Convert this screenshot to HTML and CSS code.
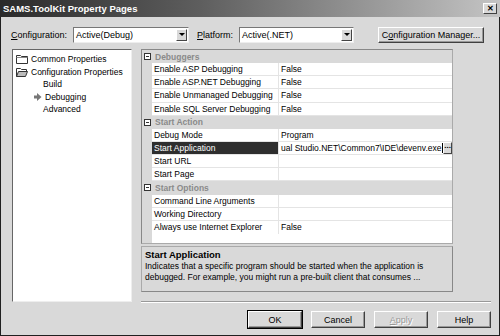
FILE: index.html
```html
<!DOCTYPE html>
<html lang="en">
<head>
    <meta charset="UTF-8">
    <title>SAMS.ToolKit Property Pages</title>
    <link rel="stylesheet" href="styles.css">
</head>
<body>
    <div class="window">
        <div class="titlebar">
            <span class="title">SAMS.ToolKit Property Pages</span>
            <span class="close">&#x2715;</span>
        </div>

        <div class="toolbar">
            <label class="field-label"><u>C</u>onfiguration:</label>
            <div class="combo combo-config">
                <span class="combo-text">Active(Debug)</span>
                <span class="combo-btn"><span class="arrow"></span></span>
            </div>
            <label class="field-label platform-label"><u>P</u>latform:</label>
            <div class="combo combo-platform">
                <span class="combo-text">Active(.NET)</span>
                <span class="combo-btn"><span class="arrow"></span></span>
            </div>
            <button class="btn btn-manager">C<u>o</u>nfiguration Manager...</button>
        </div>

        <div class="main">
            <div class="tree">
                <div class="tree-item">
                    <svg class="folder" width="12" height="10" viewBox="0 0 12 10">
                        <path d="M0.5 1.5h4l1 1h6v7h-11z" fill="#fff" stroke="#333"/>
                        <path d="M0.5 3.5h11" stroke="#888"/>
                    </svg>
                    Common Properties
                </div>
                <div class="tree-item">
                    <svg class="folder" width="12" height="10" viewBox="0 0 12 10">
                        <path d="M0.5 1.5h4l1 1h5v2" fill="none" stroke="#333"/>
                        <path d="M0.5 1.5v8h9l2-5h-9l-2 5" fill="#bbb" stroke="#333"/>
                    </svg>
                    Configuration Properties
                </div>
                <div class="tree-item child">Build</div>
                <div class="tree-item child current">
                    <svg class="pointer" width="8" height="8" viewBox="0 0 8 8">
                        <path d="M0 2.5h3v-2.5l4.5 4l-4.5 4v-2.5h-3z" fill="#777"/>
                    </svg>
                    Debugging
                </div>
                <div class="tree-item child">Advanced</div>
            </div>

            <div class="right">
                <div class="grid">
                    <div class="cat"><span class="minus"></span><span class="cat-name">Debuggers</span></div>
                    <div class="prop"><span class="name">Enable ASP Debugging</span><span class="value">False</span></div>
                    <div class="prop"><span class="name">Enable ASP.NET Debugging</span><span class="value">False</span></div>
                    <div class="prop"><span class="name">Enable Unmanaged Debugging</span><span class="value">False</span></div>
                    <div class="prop"><span class="name">Enable SQL Server Debugging</span><span class="value">False</span></div>
                    <div class="cat"><span class="minus"></span><span class="cat-name">Start Action</span></div>
                    <div class="prop"><span class="name">Debug Mode</span><span class="value">Program</span></div>
                    <div class="prop selected">
                        <span class="name">Start Application</span>
                        <span class="value edit"><span class="edit-text">ual Studio.NET\Common7\IDE\devenv.exe</span><span class="caret"></span><span class="dots">...</span></span>
                    </div>
                    <div class="prop"><span class="name">Start URL</span><span class="value"></span></div>
                    <div class="prop"><span class="name">Start Page</span><span class="value"></span></div>
                    <div class="cat"><span class="minus"></span><span class="cat-name">Start Options</span></div>
                    <div class="prop"><span class="name">Command Line Arguments</span><span class="value"></span></div>
                    <div class="prop"><span class="name">Working Directory</span><span class="value"></span></div>
                    <div class="prop last"><span class="name">Always use Internet Explorer</span><span class="value">False</span></div>
                </div>

                <div class="description">
                    <div class="desc-title">Start Application</div>
                    <p>Indicates that a specific program should be started when the application is debugged. For example, you might run a pre-built client that consumes ...</p>
                </div>

                <div class="separator"></div>

                <div class="buttons">
                    <button class="btn default">OK</button>
                    <button class="btn">Cancel</button>
                    <button class="btn disabled"><u>A</u>pply</button>
                    <button class="btn">Help</button>
                </div>
            </div>
        </div>
    </div>
</body>
</html>
```

FILE: styles.css
```css
* {
    margin: 0;
    padding: 0;
    box-sizing: border-box;
}

body {
    width: 500px;
    height: 336px;
    overflow: hidden;
    background: #fff;
    font-family: "Liberation Sans", Arial, sans-serif;
    font-size: 8.5px;
    color: #000;
}

.window {
    width: 500px;
    height: 336px;
    background: #d9d9d9;
    border: 1px solid #202020;
    border-top: none;
    display: flex;
    flex-direction: column;
}

.titlebar {
    height: 17px;
    margin: 0 -1px;
    background: linear-gradient(to right, #2a2a2a 0%, #5e5e5e 40%, #c4c4c4 100%);
    display: flex;
    align-items: center;
    justify-content: space-between;
    padding: 0 3px 0 3px;
}

.title {
    color: #fff;
    font-weight: 700;
    font-size: 9.5px;
}

.close {
    width: 14px;
    height: 11px;
    background: #d9d9d9;
    border: 1px solid;
    border-color: #fff #404040 #404040 #fff;
    font-size: 8px;
    line-height: 9px;
    text-align: center;
    font-weight: 700;
}

.toolbar {
    display: flex;
    align-items: center;
    height: 17px;
    margin-top: 9px;
    padding-left: 10px;
}

.field-label {
    margin-right: 6px;
    font-size: 9px;
}

.platform-label {
    margin-left: 8px;
}

.combo {
    height: 16px;
    background: #fff;
    border: 1px solid;
    border-color: #777 #eee #eee #777;
    display: flex;
    align-items: center;
    justify-content: space-between;
    padding: 1px 1px 1px 2px;
    font-size: 9px;
}

.combo-config {
    width: 116px;
}

.combo-platform {
    width: 115px;
}

.combo-btn {
    width: 11px;
    height: 12px;
    background: #d9d9d9;
    border: 1px solid;
    border-color: #fff #444 #444 #fff;
    display: flex;
    align-items: center;
    justify-content: center;
}

.arrow {
    border-left: 3px solid transparent;
    border-right: 3px solid transparent;
    border-top: 3px solid #000;
}

.btn {
    font-family: "Liberation Sans", Arial, sans-serif;
    font-size: 9px;
    background: #d9d9d9;
    color: #000;
    border: 1px solid;
    border-color: #fff #404040 #404040 #fff;
    box-shadow: inset -1px -1px 0 #999;
    height: 17px;
    width: 54px;
}

.btn-manager {
    width: 106px;
    margin-left: 24px;
    height: 16px;
}

.main {
    display: flex;
    padding-left: 11px;
    margin-top: 6px;
}

.tree {
    width: 120px;
    height: 253px;
    background: #fff;
    border: 1px solid;
    border-color: #666 #eee #eee #666;
    padding-top: 3px;
}

.tree-item {
    height: 12.5px;
    display: flex;
    align-items: center;
    padding-left: 3px;
    white-space: nowrap;
}

.folder {
    margin-right: 3px;
}

.tree-item.child {
    padding-left: 30px;
}

.tree-item.current {
    padding-left: 21px;
}

.pointer {
    margin-right: 3px;
}

.right {
    margin-left: 9px;
    width: 350px;
    display: flex;
    flex-direction: column;
}

.grid {
    width: 312px;
    height: 195px;
    background: #fff;
    border: 1px solid;
    border-color: #888 #aaa #aaa #888;
    background-image: linear-gradient(to right, #d9d9d9 10px, #fff 10px);
}

.cat,
.prop {
    height: 13.15px;
    display: flex;
    align-items: center;
}

.cat {
    background: #d9d9d9;
}

.minus {
    width: 7px;
    height: 7px;
    margin: 0 4px 0 2px;
    border: 1px solid #333;
    background: linear-gradient(#333, #333) center / 3px 1px no-repeat, #fff;
}

.cat-name {
    font-weight: 700;
    color: #8a8a8a;
}

.prop {
    padding-left: 10px;
}

.name,
.value {
    height: 100%;
    display: flex;
    align-items: center;
    border-bottom: 1px solid #e4e4e4;
    white-space: nowrap;
    overflow: hidden;
}

.name {
    width: 126px;
    padding-left: 2px;
}

.value {
    flex: 1;
    border-left: 1px solid #e4e4e4;
    padding-left: 2px;
}

.prop.last .name,
.prop.last .value {
    border-bottom: none;
}

.selected .name {
    background: #2e2e2e;
    color: #fff;
}

.value.edit {
    padding-right: 0;
}

.edit-text {
    white-space: nowrap;
}

.caret {
    width: 1px;
    height: 10px;
    margin-left: 1px;
    background: #000;
}

.dots {
    width: 12px;
    height: 12px;
    margin-left: auto;
    background: #d9d9d9;
    border: 1px solid;
    border-color: #fff #444 #444 #fff;
    font-size: 8px;
    line-height: 6px;
    text-align: center;
    font-weight: 700;
}

.description {
    width: 312px;
    height: 46px;
    margin-top: 2px;
    border: 1px solid;
    border-color: #aaa #888 #888 #aaa;
    padding: 2px 3px;
    line-height: 11px;
}

.desc-title {
    font-weight: 700;
    font-size: 9.5px;
    margin-bottom: 1px;
}

.separator {
    margin-top: 9px;
    width: 350px;
    height: 2px;
    border-top: 1px solid #999;
    border-bottom: 1px solid #fff;
}

.buttons {
    display: flex;
    justify-content: flex-end;
    gap: 9px;
    margin-top: 8px;
}

.btn.default {
    outline: 1px solid #000;
    outline-offset: 0;
}

.btn.disabled {
    color: #999;
    text-shadow: 1px 1px 0 #fff;
}
```
